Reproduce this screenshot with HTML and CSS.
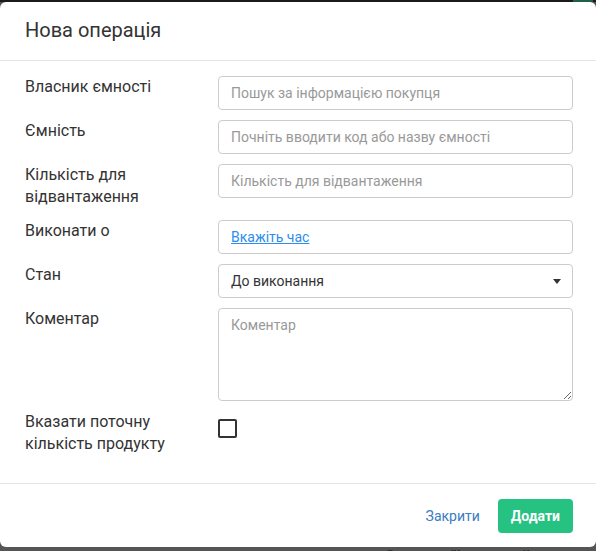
FILE: index.html
```html
<!DOCTYPE html>
<html lang="uk">
<head>
<meta charset="utf-8">
<title>Нова операція</title>
<link rel="stylesheet" href="styles.css">
</head>
<body>
<div class="topbar"><div class="topbar-tab"></div></div>
<div class="modal">
  <div class="modal-header">
    <h4 class="modal-title">Нова операція</h4>
  </div>
  <div class="modal-body">
    <div class="form-row">
      <label class="form-label">Власник ємності</label>
      <input class="form-control" type="text" placeholder="Пошук за інформацією покупця">
    </div>
    <div class="form-row">
      <label class="form-label">Ємність</label>
      <input class="form-control" type="text" placeholder="Почніть вводити код або назву ємності">
    </div>
    <div class="form-row">
      <label class="form-label">Кількість для відвантаження</label>
      <input class="form-control" type="text" placeholder="Кількість для відвантаження">
    </div>
    <div class="form-row">
      <label class="form-label">Виконати о</label>
      <div class="form-control form-static"><a class="time-link" href="#">Вкажіть час</a></div>
    </div>
    <div class="form-row">
      <label class="form-label">Стан</label>
      <div class="form-control form-select"><span>До виконання</span><span class="caret"></span></div>
    </div>
    <div class="form-row">
      <label class="form-label">Коментар</label>
      <textarea class="form-control form-textarea" placeholder="Коментар"></textarea>
    </div>
    <div class="form-row">
      <label class="form-label">Вказати поточну кількість продукту</label>
      <div><span class="checkbox"></span></div>
    </div>
  </div>
  <div class="modal-footer">
    <a class="btn-link" href="#">Закрити</a>
    <button class="btn-primary" type="button">Додати</button>
  </div>
</div>
<div class="behind-text">Операції не знайдено</div>
</body>
</html>
```
FILE: styles.css
```css
* { box-sizing: border-box; }
html, body {
  margin: 0;
  padding: 0;
  height: 100%;
  overflow: hidden;
}
body {
  background: #555555;
  font-family: Roboto, "Noto Sans", "Liberation Sans", sans-serif;
  color: #333;
}
.topbar {
  height: 2px;
  background: #1b1b1b;
  display: flex;
  justify-content: flex-end;
}
.topbar-tab {
  width: 20px;
  height: 2px;
  background: #1f6148;
  margin-right: 3px;
}
.modal {
  width: 596px;
  height: 545px;
  background: #fff;
  border-radius: 6px;
  display: flex;
  flex-direction: column;
}
.modal-header {
  padding: 16px 25px 18px;
  border-bottom: 1px solid #e5e5e5;
}
.modal-title {
  margin: 0;
  font-size: 20px;
  line-height: 24px;
  font-weight: 400;
  color: #333;
}
.modal-body {
  padding: 15px 23px 26px 25px;
  display: flex;
  flex-direction: column;
  gap: 10px;
  flex: 1;
}
.form-row {
  display: grid;
  grid-template-columns: 193px 1fr;
  align-items: start;
}
.form-label {
  font-size: 16px;
  line-height: 22px;
  padding-bottom: 2px;
  color: #333;
  padding-right: 20px;
}
.form-control {
  display: block;
  width: 100%;
  height: 34px;
  margin: 0;
  padding: 0 12px;
  border: 1px solid #ccc;
  border-radius: 4px;
  background: #fff;
  font-family: Roboto, "Noto Sans", "Liberation Sans", sans-serif;
  font-size: 14px;
  color: #333;
  outline: none;
}
.form-control::placeholder {
  color: #999;
  opacity: 1;
}
.form-static {
  display: flex;
  align-items: center;
}
.time-link {
  color: #2d8cf0;
  text-decoration: underline;
  font-size: 14px;
}
.form-select {
  display: flex;
  align-items: center;
  justify-content: space-between;
  padding-right: 11px;
}
.caret {
  width: 0;
  height: 0;
  border-left: 4px solid transparent;
  border-right: 4px solid transparent;
  border-top: 5px solid #333;
}
.form-textarea {
  height: 93px;
  padding: 6px 12px;
  line-height: 20px;
  resize: vertical;
}
.checkbox {
  display: block;
  width: 19px;
  height: 19px;
  margin-top: 8px;
  border: 2px solid #333;
  border-radius: 2px;
}
.modal-footer {
  border-top: 1px solid #e5e5e5;
  padding: 15px 23px 14px 25px;
  display: flex;
  justify-content: flex-end;
  align-items: center;
  gap: 18px;
}
.btn-link {
  color: #3b7cc2;
  text-decoration: none;
  font-size: 14px;
}
.btn-primary {
  height: 34px;
  padding: 0 13px;
  border: none;
  border-radius: 4px;
  background: #26c281;
  color: #fff;
  font-family: Roboto, "Noto Sans", "Liberation Sans", sans-serif;
  font-size: 14px;
  font-weight: 700;
}
.behind-text {
  text-align: right;
  padding-right: 21px;
  font-size: 19px;
  line-height: 19px;
  color: #262626;
}
```
